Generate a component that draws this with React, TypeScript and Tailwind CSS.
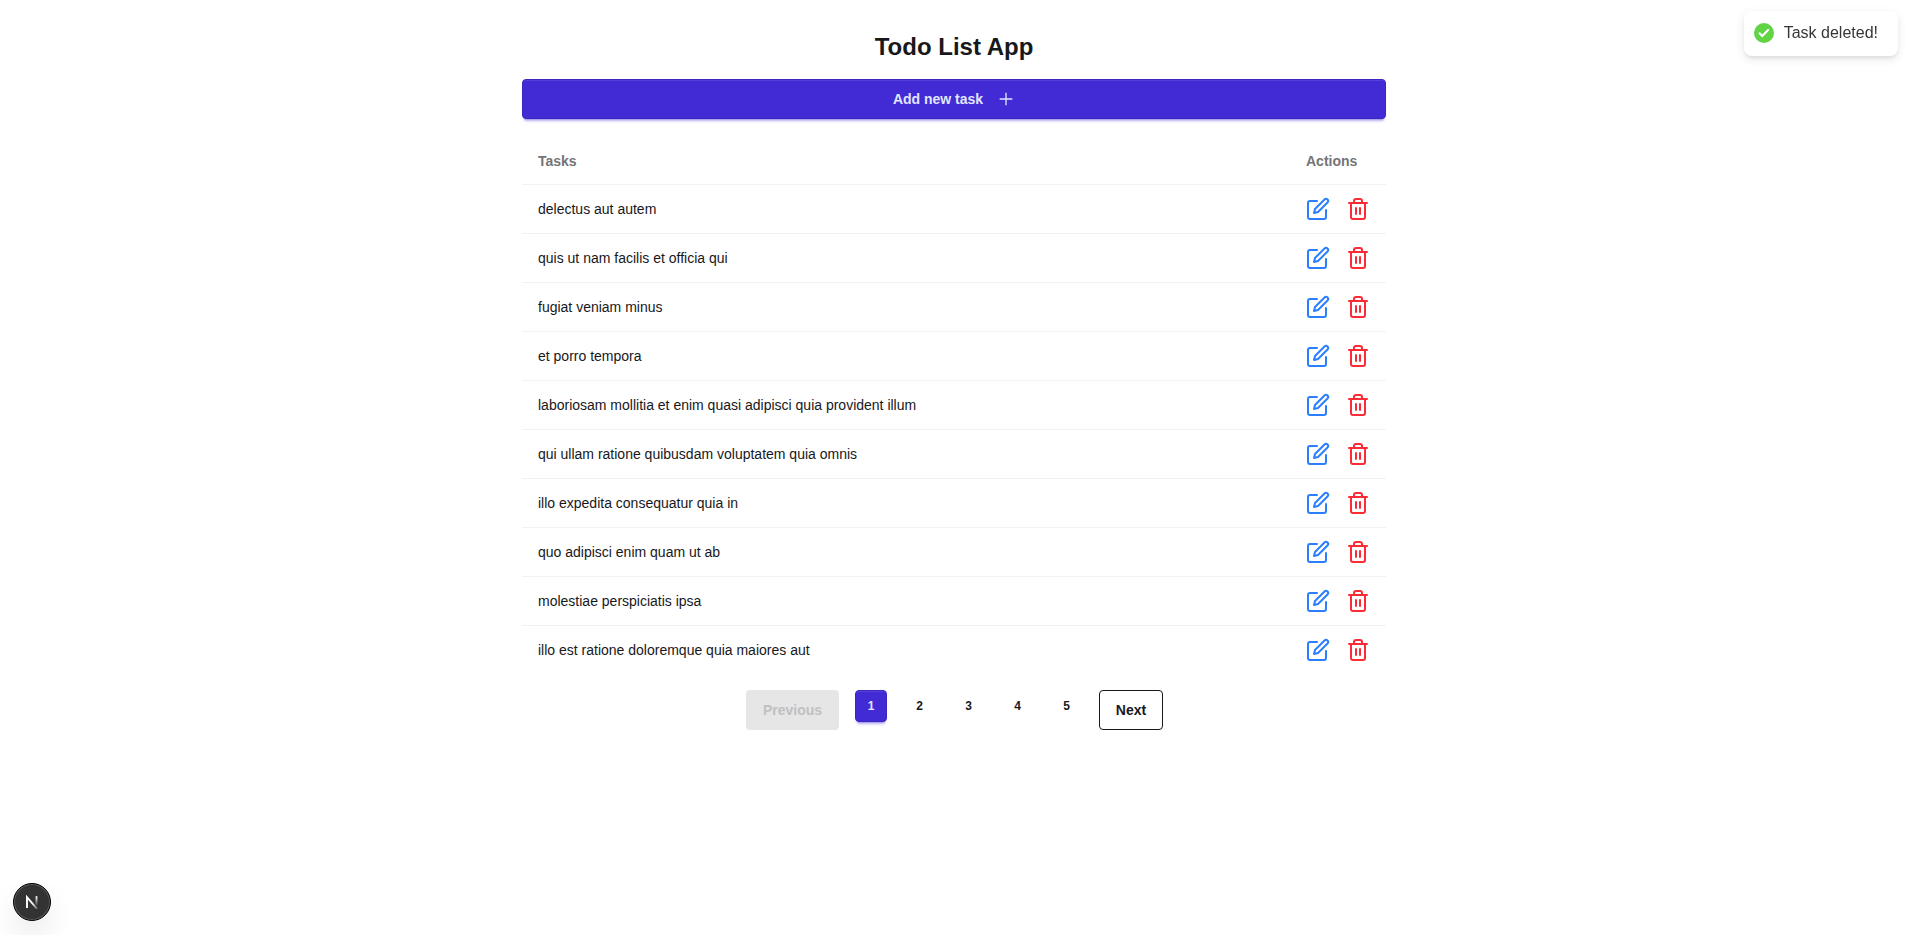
import { FiEdit, FiTrash2 } from "react-icons/fi";
import { AiOutlinePlus } from "react-icons/ai";

const tasks = [
  "delectus aut autem",
  "quis ut nam facilis et officia qui",
  "fugiat veniam minus",
  "et porro tempora",
  "laboriosam mollitia et enim quasi adipisci quia provident illum",
  "qui ullam ratione quibusdam voluptatem quia omnis",
  "illo expedita consequatur quia in",
  "quo adipisci enim quam ut ab",
  "molestiae perspiciatis ipsa",
  "illo est ratione doloremque quia maiores aut",
];

const primary =
  "border border-[#3b26bf] bg-[#422ad5] text-[#e0e7ff] shadow-[inset_0_1px_0_rgba(255,255,255,0.1),0_3px_2px_-2px_rgba(66,42,213,0.3),0_4px_3px_-2px_rgba(66,42,213,0.3)]";

function Toast() {
  return (
    <div
      role="status"
      className="fixed top-[11px] right-[11px] flex items-center rounded-lg bg-white px-2.5 pt-[7px] pb-[9px] text-base leading-[21px] text-[#363636] shadow-[0_3px_10px_rgba(0,0,0,0.1),0_3px_3px_rgba(0,0,0,0.05)]"
    >
      <svg width="20" height="20" viewBox="0 0 20 20" aria-hidden="true">
        <circle cx="10" cy="10" r="10" fill="#61d345" />
        <path d="M5.5 10.2 8.3 13 14.3 6.8" fill="none" stroke="#fff" strokeWidth="2" strokeLinecap="round" />
      </svg>
      <p className="mx-2.5 my-1">Task deleted!</p>
    </div>
  );
}

function DevBadge() {
  return (
    <button
      type="button"
      aria-label="Open Next.js Dev Tools"
      className="fixed bottom-[14px] left-[13px] flex size-[38px] items-center justify-center rounded-full border border-black bg-[#333] shadow-[inset_0_0_0_1px_rgba(255,255,255,0.2),0_16px_32px_-8px_rgba(0,0,0,0.24)]"
    >
      <svg width="14" height="14" viewBox="0 0 14 14" fill="none" aria-hidden="true">
        <defs>
          <linearGradient id="stem" x1="0" y1="2" x2="0" y2="11" gradientUnits="userSpaceOnUse">
            <stop stopColor="#fff" />
            <stop offset="1" stopColor="#fff" stopOpacity="0" />
          </linearGradient>
          <linearGradient id="slash" x1="8" y1="8" x2="13" y2="14" gradientUnits="userSpaceOnUse">
            <stop stopColor="#fff" />
            <stop offset="1" stopColor="#fff" stopOpacity="0.2" />
          </linearGradient>
        </defs>
        <path d="M2 13V2.2L12.2 14" stroke="url(#slash)" strokeWidth="1.9" />
        <path d="M11.5 1.2V10.5" stroke="url(#stem)" strokeWidth="1.8" />
      </svg>
    </button>
  );
}

export default function App() {
  return (
    <div className="min-h-screen bg-white font-['Liberation_Sans',Arial,sans-serif] text-[#18181b]">
      <main className="mx-auto max-w-[897px] pr-[17px] pl-4">
        <h1 className="pt-[31px] text-center text-2xl font-bold">Todo List App</h1>
        <button
          type="button"
          className={`mt-4 flex h-10 w-full items-center justify-center gap-1.5 rounded px-4 text-sm font-semibold ${primary}`}
        >
          Add new task <AiOutlinePlus size={18} className="ml-2" />
        </button>

        <table className="mt-5 w-full text-left text-sm">
          <thead>
            <tr className="border-b border-[#f2f2f2] leading-[21px] text-[#747476]">
              <th className="px-4 py-3 font-semibold">Tasks</th>
              <th className="w-px px-4 py-3 font-semibold">Actions</th>
            </tr>
          </thead>
          <tbody>
            {tasks.map((task) => (
              <tr key={task} className="border-b border-[#f2f2f2] last:border-0">
                <td className="px-4 py-3">{task}</td>
                <td className="px-4 py-3">
                  <div className="flex gap-4">
                    <button type="button" aria-label={`Edit ${task}`} className="text-[#2b7fff]">
                      <FiEdit size={24} />
                    </button>
                    <button type="button" aria-label={`Delete ${task}`} className="text-[#fb2c36]">
                      <FiTrash2 size={24} />
                    </button>
                  </div>
                </td>
              </tr>
            ))}
          </tbody>
        </table>

        <nav aria-label="Pagination" className="mt-4 flex justify-center gap-4 pl-px font-semibold">
          <button
            type="button"
            disabled
            className="h-10 w-[93px] rounded bg-[#e6e6e6] text-sm text-[#c0c0c2]"
          >
            Previous
          </button>
          {[1, 2, 3, 4, 5].map((page) => (
            <button
              key={page}
              type="button"
              aria-current={page === 1 ? "page" : undefined}
              className={`h-8 rounded text-xs ${page === 1 ? `w-8 ${primary}` : "w-[33px]"}`}
            >
              {page}
            </button>
          ))}
          <button type="button" className="h-10 w-16 rounded border border-[#18181b] text-sm">
            Next
          </button>
        </nav>
      </main>
      <Toast />
      <DevBadge />
    </div>
  );
}
